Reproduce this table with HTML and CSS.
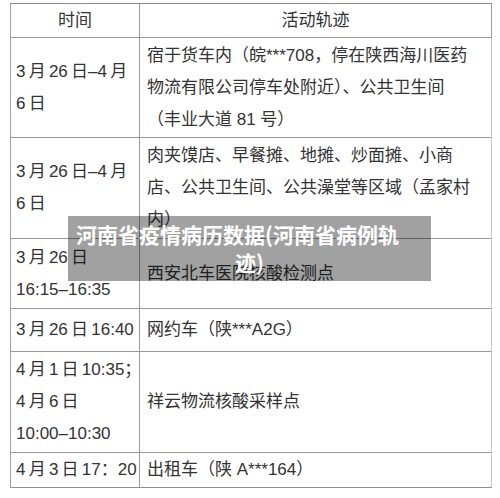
FILE: index.html
```html
<!DOCTYPE html>
<html lang="zh-CN">
<head>
<meta charset="utf-8">
<title>河南省疫情病历数据</title>
<link rel="stylesheet" href="styles.css">
</head>
<body>
<div class="wrap">
  <div class="grid">
    <div class="cell head">时间</div>
    <div class="cell head">活动轨迹</div>

    <div class="cell time r1">3 月 26 日–4 月<br>6 日</div>
    <div class="cell act r1">宿于货车内（皖***708，停在陕西海川医药<br>物流有限公司停车处附近）、公共卫生间<br>（丰业大道 81 号）</div>

    <div class="cell time r2">3 月 26 日–4 月<br>6 日</div>
    <div class="cell act r2">肉夹馍店、早餐摊、地摊、炒面摊、小商<br>店、公共卫生间、公共澡堂等区域（孟家村<br>内）</div>

    <div class="cell time r3">3 月 26 日<br>16:15–16:35</div>
    <div class="cell act r3">西安北车医院核酸检测点</div>

    <div class="cell time r4">3 月 26 日 16:40</div>
    <div class="cell act r4">网约车（陕***A2G）</div>

    <div class="cell time r5">4 月 1 日 10:35；<br>4 月 6 日<br>10:00–10:30</div>
    <div class="cell act r5">祥云物流核酸采样点</div>

    <div class="cell time r6">4 月 3 日 17：20</div>
    <div class="cell act r6">出租车（陕 A***164）</div>
  </div>
  <div class="caption">河南省疫情病历数据(河南省病例轨<br>迹)</div>
</div>
</body>
</html>
```
FILE: styles.css
```css
html, body {
  margin: 0;
  padding: 0;
  background: #ffffff;
}
body {
  font-family: "Liberation Sans", "Noto Sans CJK SC", sans-serif;
  color: #333333;
}
.wrap {
  position: relative;
  width: 500px;
  height: 498px;
  padding: 3px 0 0 10px;
  box-sizing: border-box;
}
.grid {
  display: grid;
  grid-template-columns: 129px 352px;
  grid-template-rows: 34px 100px 101px 70px 43px 101px 35px;
  border-top: 1px solid #8a8a8a;
  border-left: 1px solid #a0a0a0;
  width: 481px;
}
.cell {
  box-sizing: border-box;
  border-right: 1px solid #9a9a9a;
  border-bottom: 1px solid #9a9a9a;
  display: flex;
  align-items: center;
  padding: 0;
  font-size: 17px;
  line-height: 32px;
  white-space: nowrap;
}
.cell.time {
  padding-left: 5px;
  word-spacing: -1.5px;
}
.cell.act {
  padding-left: 7px;
  border-right-color: #c8c8c8;
}
.cell.head {
  justify-content: center;
}
.cell.r6 {
  border-bottom-color: #8f8f8f;
}
.caption {
  position: absolute;
  left: 68px;
  top: 216px;
  width: 363px;
  height: 65px;
  box-sizing: border-box;
  padding: 4px 10px 0 10px;
  background: rgba(0, 0, 0, 0.37);
  color: #ffffff;
  font-family: "Noto Sans CJK SC", "Liberation Sans", sans-serif;
  font-weight: 700;
  font-size: 21px;
  line-height: 28px;
  text-align: center;
  text-indent: -24px;
  white-space: nowrap;
}
```
